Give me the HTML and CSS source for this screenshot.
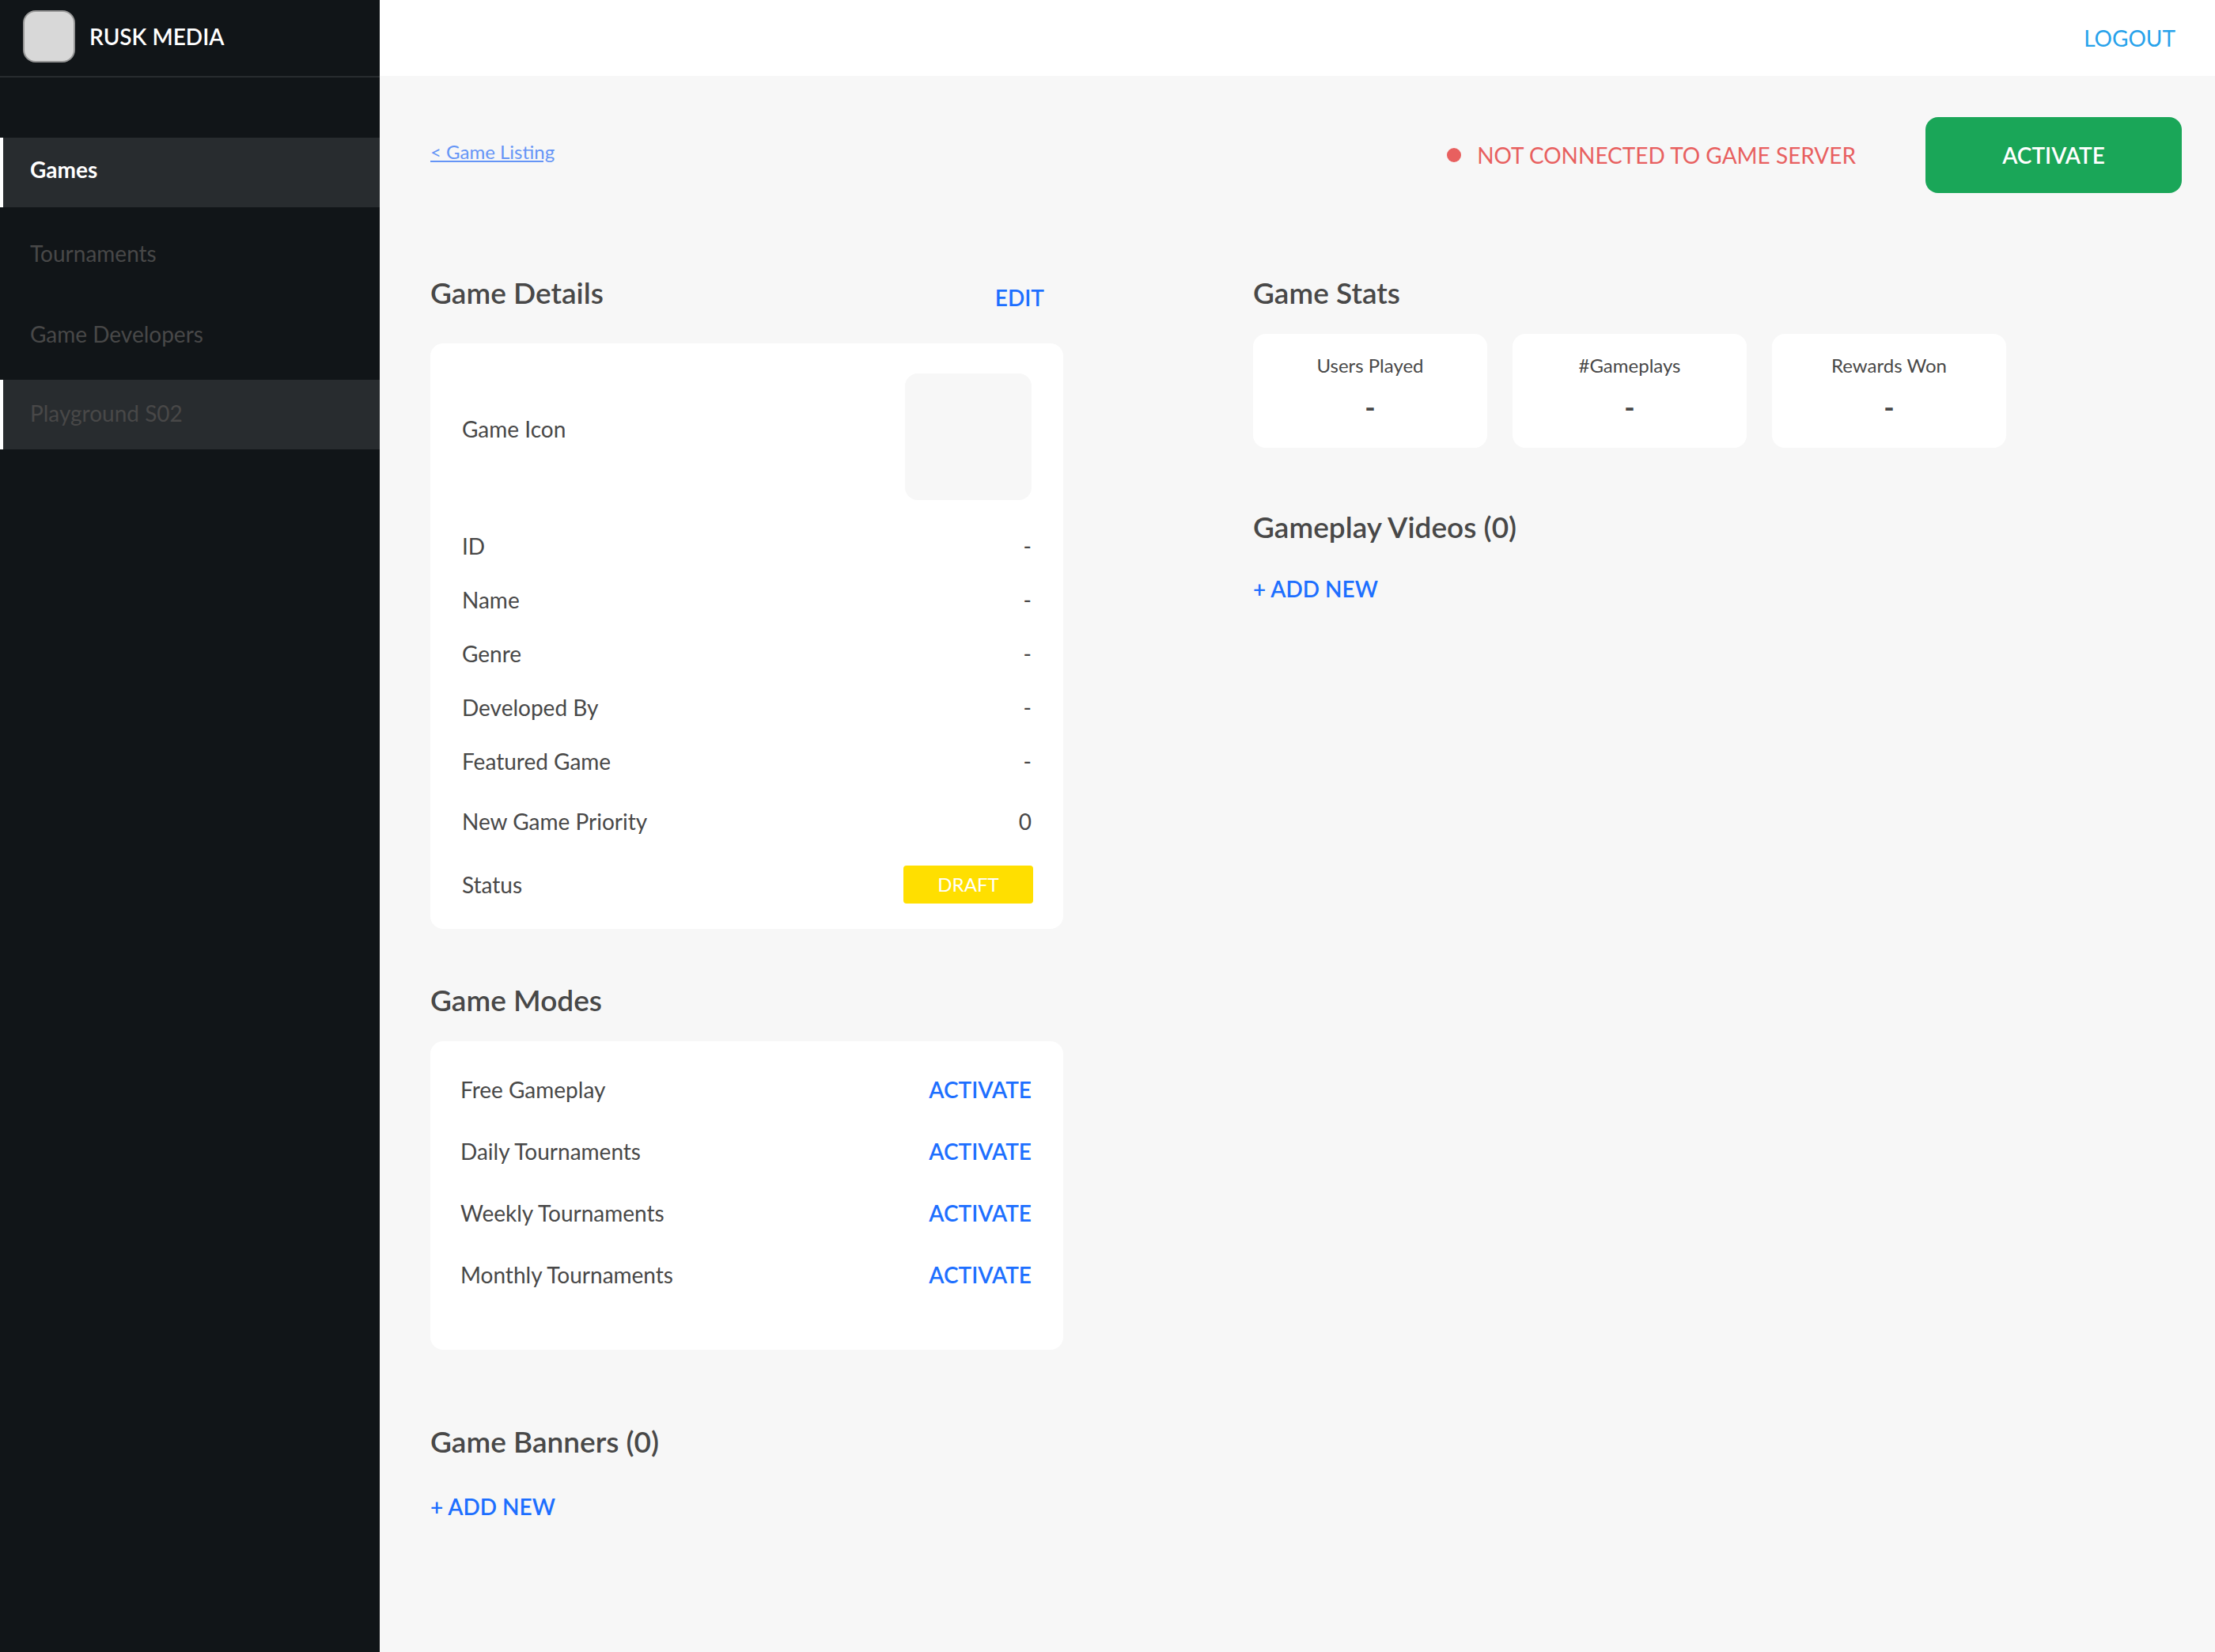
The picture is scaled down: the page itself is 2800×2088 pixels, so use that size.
FILE: index.html
```html
<!DOCTYPE html>
<html lang="en">
<head>
<meta charset="utf-8">
<meta name="viewport" content="width=device-width, initial-scale=1">
<title>Game Details</title>
<link rel="stylesheet" href="styles.css">
</head>
<body>
<div class="app">
  <aside class="sidebar">
    <div class="brand">
      <span class="brand-logo"></span>
      <span class="brand-name">RUSK MEDIA</span>
    </div>
    <nav class="nav">
      <a class="nav-item nav-item--current nav-item--highlight" href="#games">Games</a>
      <a class="nav-item" href="#tournaments">Tournaments</a>
      <a class="nav-item" href="#developers">Game Developers</a>
      <a class="nav-item nav-item--highlight" href="#playground">Playground S02</a>
    </nav>
  </aside>
  <div class="page">
    <header class="topbar">
      <a class="logout" href="#logout">LOGOUT</a>
    </header>
    <main class="content">
      <div class="toolbar">
        <a class="back" href="#games">&lt; Game Listing</a>
        <div class="toolbar-actions">
          <p class="server"><span class="server-dot"></span>NOT CONNECTED TO GAME SERVER</p>
          <button class="primary" type="button">ACTIVATE</button>
        </div>
      </div>
      <div class="columns">
        <div class="column">
          <section>
            <div class="section-head">
              <h2 class="title">Game Details</h2>
              <button class="action" type="button">EDIT</button>
            </div>
            <dl class="card details">
              <div class="row row--icon"><dt>Game Icon</dt><dd class="game-icon"></dd></div>
              <div class="row"><dt>ID</dt><dd>-</dd></div>
              <div class="row"><dt>Name</dt><dd>-</dd></div>
              <div class="row"><dt>Genre</dt><dd>-</dd></div>
              <div class="row"><dt>Developed By</dt><dd>-</dd></div>
              <div class="row"><dt>Featured Game</dt><dd>-</dd></div>
              <div class="row row--tall"><dt>New Game Priority</dt><dd>0</dd></div>
              <div class="row row--status"><dt>Status</dt><dd class="badge">DRAFT</dd></div>
            </dl>
          </section>
          <section class="section--modes">
            <h2 class="title">Game Modes</h2>
            <ul class="card modes">
              <li class="row">Free Gameplay<button class="action" type="button">ACTIVATE</button></li>
              <li class="row">Daily Tournaments<button class="action" type="button">ACTIVATE</button></li>
              <li class="row">Weekly Tournaments<button class="action" type="button">ACTIVATE</button></li>
              <li class="row">Monthly Tournaments<button class="action" type="button">ACTIVATE</button></li>
            </ul>
          </section>
          <section class="section--banners">
            <h2 class="title">Game Banners (0)</h2>
            <button class="action" type="button">+ ADD NEW</button>
          </section>
        </div>
        <div class="column">
          <section>
            <h2 class="title">Game Stats</h2>
            <dl class="stats">
              <div class="card stat"><dt>Users Played</dt><dd>-</dd></div>
              <div class="card stat"><dt>#Gameplays</dt><dd>-</dd></div>
              <div class="card stat"><dt>Rewards Won</dt><dd>-</dd></div>
            </dl>
          </section>
          <section class="section--videos">
            <h2 class="title">Gameplay Videos (0)</h2>
            <button class="action" type="button">+ ADD NEW</button>
          </section>
        </div>
      </div>
    </main>
  </div>
</div>
</body>
</html>
```

FILE: styles.css
```css
* {
  box-sizing: border-box;
}

body,
h2,
p,
dl,
dd,
ul {
  margin: 0;
  padding: 0;
}

body {
  font-family: Lato, "Open Sans", sans-serif;
  font-size: 28px;
  line-height: 40px;
  color: #484848;
  background: #f7f7f7;
}

a {
  text-decoration: none;
}

button {
  font: inherit;
  padding: 0;
  border: 0;
  background: none;
  cursor: pointer;
}

.app {
  display: grid;
  grid-template-columns: 480px minmax(0, 1fr);
  min-height: 100vh;
}

/* Sidebar */

.sidebar {
  background: #111518;
}

.brand {
  display: flex;
  align-items: center;
  gap: 18px;
  height: 98px;
  padding: 0 29px 4px;
  border-bottom: 2px solid #282c2f;
}

.brand-logo {
  width: 66px;
  height: 66px;
  border: 2px solid #979797;
  border-radius: 16px;
  background: #d8d8d8;
}

.brand-name {
  font-weight: 600;
  color: #fff;
}

.nav {
  display: flex;
  flex-direction: column;
  gap: 14px;
  padding-top: 76px;
}

.nav-item {
  display: flex;
  align-items: center;
  height: 88px;
  padding-left: 34px;
  border-left: 4px solid transparent;
  color: #484848;
}

.nav-item--highlight {
  padding-bottom: 4px;
  border-left-color: #fff;
  background: #282c2f;
}

.nav-item--current {
  padding-bottom: 8px;
  font-weight: 700;
  color: #fff;
}

/* Top bar and toolbar */

.topbar {
  display: flex;
  align-items: center;
  justify-content: flex-end;
  height: 96px;
  padding: 0 50px;
  background: #fff;
}

.logout {
  color: #27a2eb;
}

.content {
  padding: 52px 42px 64px 64px;
}

.toolbar,
.toolbar-actions,
.server,
.section-head,
.row {
  display: flex;
  align-items: center;
}

.toolbar,
.section-head,
.row {
  justify-content: space-between;
}

.back {
  padding-bottom: 8px;
  font-size: 24px;
  color: #6595f6;
  text-decoration: underline;
}

.toolbar-actions {
  gap: 88px;
}

.server {
  gap: 20px;
  color: #e8605f;
}

.server-dot {
  width: 18px;
  height: 18px;
  border-radius: 50%;
  background: #e8605f;
}

.primary {
  width: 324px;
  height: 96px;
  border-radius: 16px;
  font-weight: 600;
  color: #fff;
  background: #1aa658;
}

/* Sections */

.columns {
  display: grid;
  grid-template-columns: minmax(0, 800px) minmax(0, 1fr);
  gap: 240px;
  padding-top: 102px;
}

.title {
  font-size: 37px;
  line-height: 48px;
  font-weight: 600;
}

.section-head {
  padding-right: 24px;
}

.action {
  font-weight: 600;
  color: #1d6fff;
}

.section-head .action {
  height: 48px;
  padding-top: 10px;
}

.card {
  border-radius: 16px;
  background: #fff;
}

.details {
  margin-top: 40px;
  padding: 38px 40px 18px;
}

.row {
  height: 68px;
}

.row--tall {
  height: 84px;
}

.row--status {
  height: 76px;
}

.row--icon {
  height: 184px;
  padding-bottom: 24px;
}

.row--icon dt {
  padding-bottom: 20px;
}

.game-icon {
  width: 160px;
  height: 160px;
  border-radius: 16px;
  background: #f7f7f7;
}

.badge {
  width: 164px;
  height: 48px;
  margin-right: -2px;
  border-radius: 4px;
  font-size: 24px;
  line-height: 48px;
  text-align: center;
  color: #fff;
  background: #ffdf00;
}

.section--modes {
  margin-top: 66px;
}

.modes {
  margin-top: 28px;
  padding: 22px 40px 56px 38px;
  list-style: none;
}

.modes .row {
  height: 78px;
}

.section--banners {
  margin-top: 92px;
}

.section--banners .action {
  margin-top: 38px;
}

.stats {
  display: grid;
  grid-template-columns: repeat(3, minmax(0, 1fr));
  gap: 32px;
  max-width: 952px;
  margin-top: 28px;
}

.stat {
  height: 144px;
  padding-top: 20px;
  text-align: center;
}

.stat dt {
  font-size: 24px;
}

.stat dd {
  padding-top: 12px;
  font-size: 36px;
  font-weight: 700;
}

.section--videos {
  margin-top: 76px;
}

.section--videos .action {
  margin-top: 34px;
}
```
